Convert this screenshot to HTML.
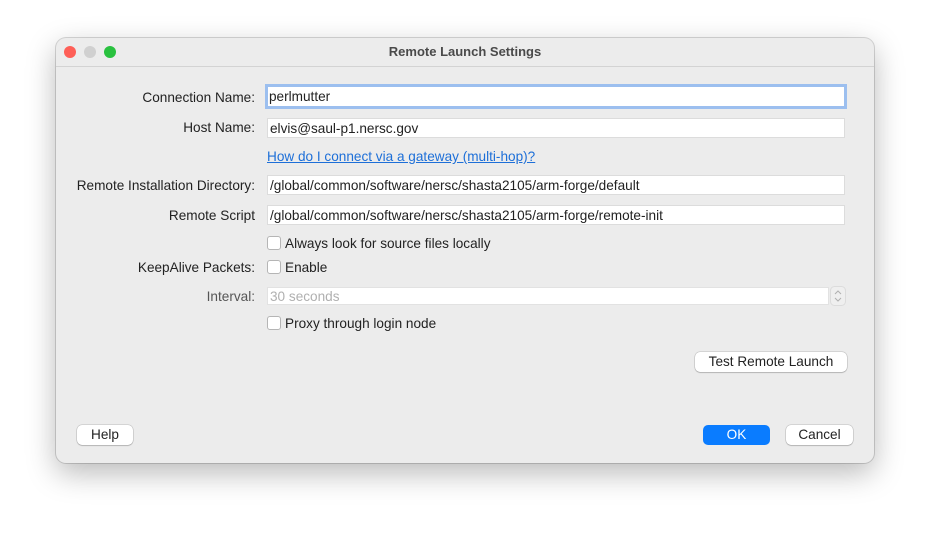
<!DOCTYPE html><html><head><style>
body{margin:0;width:930px;height:538px;background:#fff;font-family:"Liberation Sans",sans-serif;font-size:13.6px;color:#222;position:relative;overflow:hidden}
.win{position:absolute;left:56px;top:38px;width:818px;height:425px;background:#ececec;border-radius:10px;box-shadow:0 10px 30px rgba(0,0,0,.28),0 0 0 1px rgba(0,0,0,.15)}
.tb{position:absolute;left:0;top:0;width:818px;height:28px;border-bottom:1px solid #d3d3d3;text-align:center;line-height:28px;font-weight:bold;color:#4a4a4a;font-size:13px}
.d{position:absolute;top:8px;width:12px;height:12px;border-radius:50%}
.a{position:absolute}
.l{position:absolute;text-align:right;white-space:nowrap}
.f{position:absolute;background:#fff;border:1px solid #dcdcdc;box-sizing:border-box;padding-left:2px;line-height:19px;white-space:nowrap}
.cb{position:absolute;left:267px;width:12px;height:12px;border:1px solid #b5b5b5;border-radius:3px;background:#fff}
.ct{position:absolute;left:285px}
.b{position:absolute;background:#fff;border-radius:5px;box-shadow:0 0 0 .5px rgba(0,0,0,.2),0 1px 1px rgba(0,0,0,.15);text-align:center;height:20px;line-height:20px}
</style></head><body>
<div class="win"><div class="tb">Remote Launch Settings</div>
<div class="d" style="left:8px;background:#fe5f57"></div>
<div class="d" style="left:28px;background:#d0d0d0"></div>
<div class="d" style="left:48px;background:#29c13f"></div>
</div>
<div class="l" style="top:90px;right:675px">Connection Name:</div>
<div class="f" style="left:265px;top:84px;width:582px;height:25px;border:3px solid #9cbfef;line-height:20px;padding-left:1px">perlmutter</div>
<div class="l" style="top:120px;right:675px">Host Name:</div>
<div class="f" style="left:267px;top:118px;width:578px;height:20px">elvis@saul-p1.nersc.gov</div>
<div class="a" style="left:267px;top:149px;color:#1d6fd8;text-decoration:underline">How do I connect via a gateway (multi-hop)?</div>
<div class="l" style="top:178px;right:675px">Remote Installation Directory:</div>
<div class="f" style="left:267px;top:175px;width:578px;height:20px">/global/common/software/nersc/shasta2105/arm-forge/default</div>
<div class="l" style="top:208px;right:675px">Remote Script</div>
<div class="f" style="left:267px;top:205px;width:578px;height:20px">/global/common/software/nersc/shasta2105/arm-forge/remote-init</div>
<div class="cb" style="top:236px"></div><div class="ct" style="top:236px">Always look for source files locally</div>
<div class="l" style="top:260px;right:675px">KeepAlive Packets:</div>
<div class="cb" style="top:260px"></div><div class="ct" style="top:260px">Enable</div>
<div class="l" style="top:289px;right:675px;color:#555">Interval:</div>
<div class="f" style="left:267px;top:287px;width:562px;height:18px;color:#b0b0b0;border-color:#e2e2e2;line-height:18px">30 seconds</div>
<svg class="a" style="left:830px;top:286px" width="16" height="20"><rect x="0.5" y="0.5" width="15" height="19" rx="4" fill="#efefef" stroke="#dcdcdc"/><path d="M5 8 L8 5 L11 8 M5 12 L8 15 L11 12" fill="none" stroke="#b0b0b0" stroke-width="1"/></svg>
<div class="cb" style="top:316px"></div><div class="ct" style="top:316px">Proxy through login node</div>
<div class="b" style="left:695px;top:352px;width:152px">Test Remote Launch</div>
<div class="b" style="left:77px;top:425px;width:56px">Help</div>
<div class="b" style="left:703px;top:425px;width:67px;background:#0a7cff;color:#fff;box-shadow:none">OK</div>
<div class="b" style="left:786px;top:425px;width:67px">Cancel</div>
</body></html>
